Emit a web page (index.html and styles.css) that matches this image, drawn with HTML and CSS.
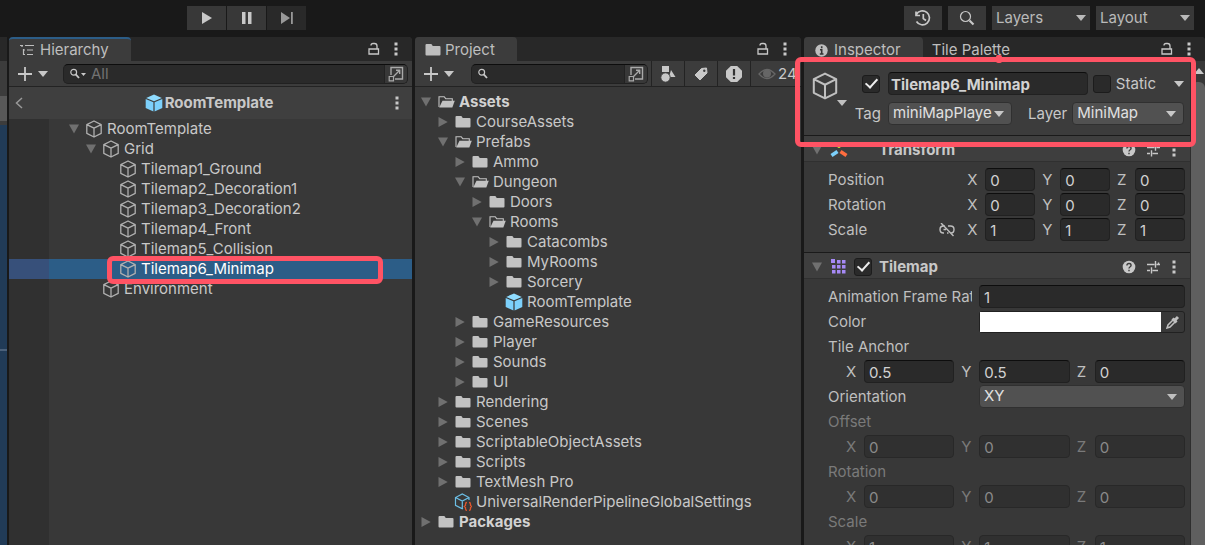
FILE: index.html
```html
<!DOCTYPE html>
<html lang="en">
<head>
<meta charset="utf-8">
<title>RoomTemplate - Editor</title>
<link rel="stylesheet" href="styles.css">
</head>
<body>
<svg class="defs" aria-hidden="true">
  <symbol id="cube" viewBox="0 0 18 18"><path d="M9 1 16.2 4.6V13.4L9 17 1.800 13.400V4.600ZM1.800 4.600 9 8.200 16.200 4.600M9 8.200V17" fill="none" stroke="currentColor" stroke-width="1.300" stroke-linejoin="round"/></symbol>
  <symbol id="prefab" viewBox="0 0 18 18"><path d="M9 .500 16.800 3.900 9 7.300 1.200 3.900Z" fill="#8fdcff"/><path d="M.700 5 8.400 8.300V17.500L.700 14Z" fill="#7cd0fb"/><path d="M17.300 5 9.600 8.300V17.500L17.300 14Z" fill="#7cd0fb"/></symbol>
  <symbol id="folder" viewBox="0 0 18 18"><path d="M1.500 4Q1.500 3 2.500 3H7Q7.700 3 8 3.700L8.700 5H15.500Q16.500 5 16.500 6V13.500Q16.500 14.500 15.500 14.500H2.500Q1.500 14.500 1.500 13.500Z" fill="currentColor"/></symbol>
  <symbol id="folder-open" viewBox="0 0 18 18"><path d="M2 14V3.700H7.200L8.700 5.700H15.300V8" fill="none" stroke="currentColor" stroke-width="1.100"/><path d="M5.500 7.700H17.800L15.300 14.600H2.200Z" fill="currentColor"/></symbol>
  <symbol id="down" viewBox="0 0 10 10"><path d="M0 .500H10L5 9.500Z" fill="currentColor"/></symbol>
  <symbol id="right" viewBox="0 0 10 10"><path d="M.500 0V10L9.700 5Z" fill="currentColor"/></symbol>
  <symbol id="caret" viewBox="0 0 10 6"><path d="M0 0H10L5 6Z" fill="currentColor"/></symbol>
  <symbol id="dots" viewBox="0 0 4 14"><path d="M.500 .500h3v3h-3zM.500 5.500h3v3h-3zM.500 10.500h3v3h-3z" fill="currentColor"/></symbol>
  <symbol id="lock" viewBox="0 0 12 14"><path d="M1 7H10.500V12H1ZM3 3.500Q3 1.500 5 1.500H6.500Q9 1.500 9 4V7" fill="none" stroke="currentColor" stroke-width="1.300"/></symbol>
  <symbol id="plus" viewBox="0 0 16 16"><path d="M8 1V15M1 8H15" stroke="currentColor" stroke-width="1.800"/></symbol>
  <symbol id="expand" viewBox="0 0 16 16"><path d="M3 9V1.500H14.500V13H7M5.500 10.500 11.500 4.500M8 4.300H11.700V8" fill="none" stroke="currentColor" stroke-width="1.400"/><path d="M1.200 10.500H5.500V14.800H1.200Z" fill="none" stroke="currentColor" stroke-width="1.200"/></symbol>
  <symbol id="find" viewBox="0 0 12 12"><circle cx="4.700" cy="4.200" r="2.900" fill="none" stroke="currentColor" stroke-width="1.200"/><path d="M6.500 6.200 10 10" stroke="currentColor" stroke-width="1.800"/></symbol>
  <symbol id="help" viewBox="0 0 14 14"><circle cx="7" cy="7" r="6.300" fill="currentColor"/><path d="M4.900 5.500Q5 3.500 7 3.500T9.100 5.300Q9.100 6.300 7.900 7 7 7.500 7 8.600M7 9.700V11.200" fill="none" stroke="#3c3c3c" stroke-width="1.400"/></symbol>
  <symbol id="preset" viewBox="0 0 14 14"><path d="M0 4.500H7.500M9.500 4.500H13M8.500 1V7.800M0 10.500H3M5.500 10.500H11M4.500 7.200V13.500M11.500 4.500V2.500" stroke="currentColor" stroke-width="1.400"/></symbol>
</svg>

<header class="topbar">
  <div class="playback">
    <button class="tool" aria-label="Play"><svg width="12" height="14" viewBox="0 0 12 14"><path d="M1 1 11 7 1 13Z" fill="currentColor"/></svg></button>
    <button class="tool" aria-label="Pause"><svg width="12" height="14" viewBox="0 0 12 14"><path d="M1 1H4.500V13H1ZM7 1H10.500V13H7Z" fill="currentColor"/></svg></button>
    <button class="tool off" aria-label="Step"><svg width="14" height="14" viewBox="0 0 14 14"><path d="M1 1 10 7 1 13ZM11 1H12.800V13H11Z" fill="currentColor"/></svg></button>
  </div>
  <div class="session">
    <button class="tool" aria-label="History"><svg width="18" height="18" viewBox="0 0 18 18"><path d="M2.300 5.500A7 7 0 1 1 2.500 12.500M2 2.500V6.500H6M9.300 5V9.500L12 11.500" fill="none" stroke="currentColor" stroke-width="1.700"/></svg></button>
    <button class="tool" aria-label="Search"><svg width="16" height="16" viewBox="0 0 16 16"><circle cx="6.500" cy="6.500" r="5" fill="none" stroke="currentColor" stroke-width="1.200"/><path d="M10.500 10.500 14.500 14.500" stroke="currentColor" stroke-width="2.200"/></svg></button>
    <button class="tool menu">Layers<svg class="caret"><use href="#caret"/></svg></button>
    <button class="tool menu">Layout<svg class="caret"><use href="#caret"/></svg></button>
  </div>
</header>

<main class="docks">
  <aside class="scene">
    <div class="scene-tabs"></div><div class="scene-tools"></div><div class="scene-item"></div><div class="scene-view"><hr></div>
  </aside>

  <section class="panel">
    <div class="tabs">
      <button class="tab focused"><svg width="14" height="12" viewBox="0 0 14 12"><path d="M0 1.500H3M5 1.500H14M3 6H5M7 6H13M3 10.500H5M7 10.500H13M2 1.500V3M3.500 5V11" stroke="currentColor" stroke-width="1.200"/></svg>Hierarchy</button>
      <span class="tab-tools"><svg class="lock"><use href="#lock"/></svg><svg class="dots"><use href="#dots"/></svg></span>
    </div>
    <div class="bar">
      <button class="add" aria-label="Create"><svg class="plus"><use href="#plus"/></svg><svg class="caret"><use href="#caret"/></svg></button>
      <label class="search wide"><svg class="find"><use href="#find"/></svg><svg class="tiny"><use href="#caret"/></svg><input type="text" placeholder="All" aria-label="Search hierarchy"><span class="expand"><svg class="i16"><use href="#expand"/></svg></span></label>
    </div>
    <div class="crumb">
      <button class="plain" aria-label="Back"><svg width="8" height="12" viewBox="0 0 8 12"><path d="M7 1 1.500 6 7 11" fill="none" stroke="currentColor" stroke-width="1.500"/></svg></button>
      <strong><svg class="i18"><use href="#prefab"/></svg>RoomTemplate</strong>
      <svg class="dots"><use href="#dots"/></svg>
    </div>
    <ul class="tree scene-tree">
      <li class="d0"><svg class="arrow"><use href="#down"/></svg><svg class="i18"><use href="#cube"/></svg>RoomTemplate</li>
      <li class="d1"><svg class="arrow"><use href="#down"/></svg><svg class="i18"><use href="#cube"/></svg>Grid</li>
      <li class="d2"><i class="arrow"></i><svg class="i18"><use href="#cube"/></svg>Tilemap1_Ground</li>
      <li class="d2"><i class="arrow"></i><svg class="i18"><use href="#cube"/></svg>Tilemap2_Decoration1</li>
      <li class="d2"><i class="arrow"></i><svg class="i18"><use href="#cube"/></svg>Tilemap3_Decoration2</li>
      <li class="d2"><i class="arrow"></i><svg class="i18"><use href="#cube"/></svg>Tilemap4_Front</li>
      <li class="d2"><i class="arrow"></i><svg class="i18"><use href="#cube"/></svg>Tilemap5_Collision</li>
      <li class="d2 selected"><i class="arrow"></i><svg class="i18"><use href="#cube"/></svg>Tilemap6_Minimap<span class="mark row-mark"></span></li>
      <li class="d1"><i class="arrow"></i><svg class="i18"><use href="#cube"/></svg>Environment</li>
    </ul>
  </section>

  <section class="panel">
    <div class="tabs">
      <button class="tab"><svg class="i18"><use href="#folder"/></svg>Project</button>
      <span class="tab-tools"><svg class="lock"><use href="#lock"/></svg><svg class="dots"><use href="#dots"/></svg></span>
    </div>
    <div class="bar">
      <button class="add" aria-label="Create"><svg class="plus"><use href="#plus"/></svg><svg class="caret"><use href="#caret"/></svg></button>
      <label class="search"><svg class="find"><use href="#find"/></svg><input type="text" aria-label="Search project"><span class="expand"><svg class="i16"><use href="#expand"/></svg></span></label>
      <div class="filters">
        <button aria-label="Filter by type"><svg width="16" height="18" viewBox="0 0 16 18"><path d="M2 1H9V7H2ZM11 5 15.500 12H9Z" fill="currentColor"/><circle cx="5.500" cy="12.500" r="4.700" fill="currentColor" stroke="#3c3c3c"/></svg></button>
        <button aria-label="Filter by label"><svg width="14" height="14" viewBox="0 0 14 14"><path d="M7.500 1.500 12.500 1 13 6 6 13 1 8Z" fill="currentColor" stroke="currentColor" stroke-linejoin="round"/><circle cx="10.300" cy="3.700" r="1.200" fill="#3c3c3c"/></svg></button>
        <button aria-label="Problems"><svg width="18" height="18" viewBox="0 0 18 18"><path d="M5.800 1H12.200L17 5.800V12.200L12.200 17H5.800L1 12.200V5.800Z" fill="currentColor"/><path d="M9 4V10.500M9 12V14" stroke="#333" stroke-width="2.200"/></svg></button>
        <button class="hidden-count"><svg width="18" height="12" viewBox="0 0 18 12"><path d="M1 6Q9-3 17 6 9 15 1 6Z" fill="none" stroke="#666" stroke-width="1.300"/><circle cx="9" cy="5.500" r="4" fill="#666"/></svg>24</button>
      </div>
    </div>
    <ul class="tree">
      <li class="d0 root"><svg class="arrow"><use href="#down"/></svg><svg class="i18"><use href="#folder-open"/></svg>Assets</li>
      <li class="d1"><svg class="arrow"><use href="#right"/></svg><svg class="i18"><use href="#folder"/></svg>CourseAssets</li>
      <li class="d1"><svg class="arrow"><use href="#down"/></svg><svg class="i18"><use href="#folder-open"/></svg>Prefabs</li>
      <li class="d2"><svg class="arrow"><use href="#right"/></svg><svg class="i18"><use href="#folder"/></svg>Ammo</li>
      <li class="d2"><svg class="arrow"><use href="#down"/></svg><svg class="i18"><use href="#folder-open"/></svg>Dungeon</li>
      <li class="d3"><svg class="arrow"><use href="#right"/></svg><svg class="i18"><use href="#folder"/></svg>Doors</li>
      <li class="d3"><svg class="arrow"><use href="#down"/></svg><svg class="i18"><use href="#folder-open"/></svg>Rooms</li>
      <li class="d4"><svg class="arrow"><use href="#right"/></svg><svg class="i18"><use href="#folder"/></svg>Catacombs</li>
      <li class="d4"><svg class="arrow"><use href="#right"/></svg><svg class="i18"><use href="#folder"/></svg>MyRooms</li>
      <li class="d4"><svg class="arrow"><use href="#right"/></svg><svg class="i18"><use href="#folder"/></svg>Sorcery</li>
      <li class="d4"><i class="arrow"></i><svg class="i18"><use href="#prefab"/></svg>RoomTemplate</li>
      <li class="d2"><svg class="arrow"><use href="#right"/></svg><svg class="i18"><use href="#folder"/></svg>GameResources</li>
      <li class="d2"><svg class="arrow"><use href="#right"/></svg><svg class="i18"><use href="#folder"/></svg>Player</li>
      <li class="d2"><svg class="arrow"><use href="#right"/></svg><svg class="i18"><use href="#folder"/></svg>Sounds</li>
      <li class="d2"><svg class="arrow"><use href="#right"/></svg><svg class="i18"><use href="#folder"/></svg>UI</li>
      <li class="d1"><svg class="arrow"><use href="#right"/></svg><svg class="i18"><use href="#folder"/></svg>Rendering</li>
      <li class="d1"><svg class="arrow"><use href="#right"/></svg><svg class="i18"><use href="#folder"/></svg>Scenes</li>
      <li class="d1"><svg class="arrow"><use href="#right"/></svg><svg class="i18"><use href="#folder"/></svg>ScriptableObjectAssets</li>
      <li class="d1"><svg class="arrow"><use href="#right"/></svg><svg class="i18"><use href="#folder"/></svg>Scripts</li>
      <li class="d1"><svg class="arrow"><use href="#right"/></svg><svg class="i18"><use href="#folder"/></svg>TextMesh Pro</li>
      <li class="d1"><i class="arrow"></i><svg class="i18" viewBox="0 0 18 18"><path d="M9 15.300 8.300 15.700 1.500 12.300V4.500L8.300 1 15 4.500V7M1.500 4.500 8.300 8 15 4.500M8.300 8V15.700" fill="none" stroke="#6cbfe6" stroke-width="1.200"/><path d="M13 9.500Q11.500 9.500 11.500 11V12.500L10.300 13.500 11.500 14.500V16Q11.500 17.300 13 17.300M15 9.500Q16.500 9.500 16.500 11V12.500L17.600 13.500 16.500 14.500V16Q16.500 17.300 15 17.300" fill="none" stroke="#e0562d" stroke-width="1.300"/></svg>UniversalRenderPipelineGlobalSettings</li>
      <li class="d0 root"><svg class="arrow"><use href="#right"/></svg><svg class="i18"><use href="#folder"/></svg>Packages</li>
    </ul>
  </section>

  <section class="panel inspector">
    <div class="tabs">
      <button class="tab"><svg width="13" height="13" viewBox="0 0 13 13"><circle cx="6.500" cy="6.500" r="6.200" fill="currentColor"/><path d="M6.700 2.300V4.200M5 5.700H6.700V10M4.800 10H8.500" fill="none" stroke="#333" stroke-width="1.600"/></svg>Inspector</button>
      <button class="tab idle">Tile Palette</button>
      <span class="tab-tools"><svg class="lock"><use href="#lock"/></svg><svg class="dots"><use href="#dots"/></svg></span>
    </div>
    <div class="inspect-body">
      <div class="components">
        <div class="object">
          <div class="object-icon"><svg class="i28"><use href="#cube"/></svg><svg class="caret"><use href="#caret"/></svg></div>
          <div class="object-fields">
            <div class="object-row">
              <span class="lead"><input type="checkbox" checked aria-label="Active"></span>
              <input class="field name" type="text" value="Tilemap6_Minimap" aria-label="Name">
              <label class="static"><input type="checkbox">Static</label>
              <svg class="caret"><use href="#caret"/></svg>
            </div>
            <div class="object-row">
              <label class="lead" for="tag">Tag</label>
              <span class="drop tag-drop"><select id="tag"><option>miniMapPlayer</option></select><svg class="caret"><use href="#caret"/></svg></span>
              <label class="layer-label" for="layer">Layer</label>
              <span class="drop"><select id="layer"><option>MiniMap</option></select><svg class="caret"><use href="#caret"/></svg></span>
            </div>
          </div>
          <span class="mark object-mark"></span>
        </div>

        <div class="component-head">
          <svg class="arrow"><use href="#down"/></svg>
          <svg class="i18" viewBox="0 0 18 18"><path d="M9 1V7" stroke="#b6d433" stroke-width="2.600"/><path d="M7.500 10.500 1.500 14.500" stroke="#7cd0fb" stroke-width="3.600"/><path d="M10.500 10.500 16.500 14.500" stroke="#ff6d3f" stroke-width="3.600"/></svg>
          <span class="box-space"></span><h2>Transform</h2>
          <svg class="i14"><use href="#help"/></svg><svg class="i14"><use href="#preset"/></svg><svg class="dots"><use href="#dots"/></svg>
        </div>
        <div class="props transform">
          <div class="prop"><span>Position</span><div class="axes short"><label>X<input class="field" value="0"></label><label>Y<input class="field" value="0"></label><label>Z<input class="field" value="0"></label></div></div>
          <div class="prop"><span>Rotation</span><div class="axes short"><label>X<input class="field" value="0"></label><label>Y<input class="field" value="0"></label><label>Z<input class="field" value="0"></label></div></div>
          <div class="prop"><span>Scale</span><svg class="unlink" width="16" height="14" viewBox="0 0 16 14"><path d="M6 3H4.500Q1 3 1 6.500T4.500 10H5M9 3H11.500Q15 3 15 6.500T12 10M4.500 6.500H7M9.500 10H8M2 0 14.500 13" fill="none" stroke="currentColor" stroke-width="1.400"/></svg><div class="axes short"><label>X<input class="field" value="1"></label><label>Y<input class="field" value="1"></label><label>Z<input class="field" value="1"></label></div></div>
        </div>

        <div class="component-head">
          <svg class="arrow"><use href="#down"/></svg>
          <svg class="i18" viewBox="0 0 18 18"><path d="M1 1h4v4H1zM7 2h3.500v3.500H7zM12 2h3.500v3.500H12zM2 7h3.500v3.500H2zM7 7h3.500v3.500H7zM12 7h3.500v3.500H12zM2 12h3.500v3.500H2zM7 12h3.500v3.500H7zM12 12h3.500v3.500H12z" fill="#a689f5"/></svg>
          <input class="box-space" type="checkbox" checked aria-label="Enable Tilemap"><h2>Tilemap</h2>
          <svg class="i14"><use href="#help"/></svg><svg class="i14"><use href="#preset"/></svg><svg class="dots"><use href="#dots"/></svg>
        </div>
        <div class="props">
          <div class="prop"><label class="key" for="rate">Animation Frame Rate</label><input class="field" id="rate" value="1"></div>
          <div class="prop"><span class="key">Color</span><div class="color"><button class="swatch" aria-label="Color"></button><button class="picker" aria-label="Pick color"><svg width="14" height="14" viewBox="0 0 14 14"><path d="M1 13 2 10 8 4 10 6 4 12Z" fill="none" stroke="currentColor" stroke-width="1.500"/><path d="M6.500 3.500 10.500 7.500M8.500 5.500 12 2" stroke="currentColor" stroke-width="3"/></svg></button></div></div>
          <div class="prop"><span>Tile Anchor</span></div>
          <div class="prop"><div class="axes long"><label>X<input class="field" value="0.5"></label><label>Y<input class="field" value="0.5"></label><label>Z<input class="field" value="0"></label></div></div>
          <div class="prop"><label class="key" for="orient">Orientation</label><span class="drop"><select id="orient"><option>XY</option></select><svg class="caret"><use href="#caret"/></svg></span></div>
          <fieldset disabled>
            <div class="prop"><span>Offset</span></div>
            <div class="prop"><div class="axes long"><label>X<input class="field" value="0"></label><label>Y<input class="field" value="0"></label><label>Z<input class="field" value="0"></label></div></div>
            <div class="prop"><span>Rotation</span></div>
            <div class="prop"><div class="axes long"><label>X<input class="field" value="0"></label><label>Y<input class="field" value="0"></label><label>Z<input class="field" value="0"></label></div></div>
            <div class="prop"><span>Scale</span></div>
            <div class="prop"><div class="axes long"><label>X<input class="field" value="1"></label><label>Y<input class="field" value="1"></label><label>Z<input class="field" value="1"></label></div></div>
          </fieldset>
        </div>
      </div>
      <div class="scrollbar"><svg class="scroll-up" width="10" height="6" viewBox="0 0 10 6"><path d="M0 6H10L5 0Z" fill="currentColor"/></svg><div class="thumb"></div></div>
    </div>
  </section>
</main>
</body>
</html>
```
FILE: styles.css
```css
* { box-sizing: border-box; }
html, body { height: 100%; }
body {
  margin: 0;
  display: flex;
  flex-direction: column;
  overflow: hidden;
  background: #191919;
  color: #c8c8c8;
  font: 15px/20px Inter, "Liberation Sans", sans-serif;
}
button, input, select { font: inherit; color: inherit; margin: 0; }
button { display: flex; align-items: center; border: 0; padding: 0; background: none; }
svg { flex: none; display: block; }
h2 { margin: 0; font-size: 15px; font-weight: 700; }

.defs { position: absolute; width: 0; height: 0; }
.i14 { width: 14px; height: 14px; }
.i16 { width: 16px; height: 16px; }
.i18 { width: 18px; height: 18px; }
.i28 { width: 28px; height: 28px; }
.caret { width: 10px; height: 6px; }
.tiny { width: 5px; height: 3px; }
.plus { width: 16px; height: 16px; }
.find { width: 12px; height: 12px; }
.lock { width: 12px; height: 14px; }
.dots { width: 4px; height: 14px; }
.arrow { width: 10px; height: 10px; flex: none; color: #707070; }

/* Top toolbar */
.topbar {
  flex: none;
  display: flex;
  justify-content: space-between;
  padding: 6px 11px 7px 187px;
}
.playback { display: flex; gap: 1px; }
.session { display: flex; gap: 6px; }
.tool { width: 39px; height: 24px; justify-content: center; background: #383838; }
.tool.off { background: #292929; color: #999; }
.session .tool { width: 38px; }
.session .menu { width: 98px; justify-content: space-between; padding: 0 4px; color: #bababa; }

/* Docked panels */
.docks {
  flex: 1;
  min-height: 0;
  display: grid;
  grid-template-columns: 6px 403fr 386fr 401fr;
  column-gap: 3px;
  overflow: hidden;
}
.docks > * { min-width: 0; min-height: 0; }
.scene { display: flex; flex-direction: column; background: #3c3c3c; margin-right: -1px; }
.scene-tabs { height: 24px; background: #282828; }
.scene-tools { height: 35px; }
.scene-item { height: 25px; background: #585858; margin-bottom: 4px; }
.scene-view { flex: 1; background: #213b57; }
.scene-view hr { margin: 224px 0 0; border: 0; height: 2px; background: #4b617b; }

.panel { display: flex; flex-direction: column; background: #383838; border-radius: 4px 4px 0 0; }
.tabs { height: 24px; flex: none; display: flex; background: #282828; border-radius: 4px 4px 0 0; }
.tab {
  gap: 6px;
  padding: 2px 22px 0 11px;
  border-radius: 4px 4px 0 0;
  background: #3c3c3c;
  color: #bebebe;
}
.tab.focused { border-top: 2px solid #2c5d87; padding-top: 0; }
.tab .i18 { margin: 0 -3px 0 -2px; }
.tab.idle { background: none; padding-left: 9px; }
.tab-tools { display: flex; align-items: center; gap: 14px; margin-left: auto; padding-right: 14px; }

.bar {
  height: 26px;
  flex: none;
  display: flex;
  background: #3c3c3c;
  border-bottom: 1px solid #232323;
}
.add { gap: 5px; padding: 0 0 0 8px; }
.search {
  flex: 1;
  min-width: 0;
  display: flex;
  align-items: center;
  margin: 3px 3px 2px 17px;
  padding-left: 5px;
  background: #2a2a2a;
  border: 1px solid #212121;
  border-top-color: #0d0d0d;
  border-radius: 5px;
}
.search.wide { margin: 3px 4px 2px 15px; }
.search input { flex: 1; min-width: 0; height: 18px; padding: 0 5px; border: 0; background: none; outline: 0; }
.search.wide input { padding-left: 0; }
.search .tiny { margin-right: 5px; }
.search input::placeholder { color: #727272; }
.expand { align-self: stretch; display: flex; align-items: center; padding: 0 3px; background: #383838; border-left: 1px solid #222; border-radius: 0 4px 4px 0; color: #aaa; }
.filters { display: flex; }
.filters button { width: 33px; justify-content: center; border-left: 1px solid #232323; }
.filters .hidden-count { width: 51px; gap: 2px; justify-content: flex-start; padding-left: 7px; }

.crumb {
  height: 32px;
  flex: none;
  display: flex;
  align-items: center;
  justify-content: space-between;
  padding: 0 13px 0 6px;
  background: #3f3f3f;
}
.crumb strong { display: flex; align-items: center; gap: 2px; font-weight: 700; }
.plain { color: #999; }

.tree { flex: 1; margin: 0; padding: 5px 0 0; list-style: none; }
.tree li { height: 20px; display: flex; align-items: center; padding-left: var(--indent); white-space: nowrap; position: relative; }
.tree .arrow { margin-right: 6px; }
.tree .i18 { margin-right: 4px; color: #c2c2c2; }
.tree .root { font-weight: 700; color: #d2d2d2; }
.tree .d0 { --indent: 6px; }
.tree .d1 { --indent: 23px; }
.tree .d2 { --indent: 40px; }
.tree .d3 { --indent: 57px; }
.tree .d4 { --indent: 74px; }
.scene-tree { padding: 0; background: linear-gradient(90deg, #303030 40px, #383838 40px); }
.scene-tree .i18 { color: #b0b0b0; margin-right: 4px; }
.scene-tree .d0 { --indent: 60px; }
.scene-tree .d1 { --indent: 77px; }
.scene-tree .d2 { --indent: 94px; }
.tree .selected { background: linear-gradient(90deg, #37507a 40px, #2c5d87 40px); color: #fff; }

/* Red highlight frames */
.mark { position: absolute; z-index: 2; border: 5px solid #ff5364; border-radius: 6px; pointer-events: none; }
.row-mark { left: 98px; right: 29px; top: -3px; bottom: -5px; }
.object-mark { left: -9px; right: -6px; top: -4px; bottom: -12px; }
.object-mark::before { content: ""; position: absolute; left: 50%; top: -7px; width: 6px; height: 8px; background: #ff5364; border-radius: 2px; }

/* Inspector */
.inspect-body { flex: 1; min-height: 0; display: flex; }
.components { flex: 1; min-width: 0; }
.scrollbar { width: 15px; display: flex; flex-direction: column; border-left: 1px solid #2e2e2e; }
.scroll-up { margin: 7px 0 8px 3px; }
.thumb { flex: 1; background: #5f5f5f; border-radius: 6px 6px 0 0; }

.object { position: relative; display: flex; padding: 11px 6px 10px 7px; background: #3c3c3c; }
.object-icon { display: flex; flex-direction: column; width: 36px; color: #c0c0c0; }
.object-icon .caret { margin-left: 26px; }
.object-fields { flex: 1; min-width: 0; display: flex; flex-direction: column; gap: 7px; }
.object-row { display: flex; align-items: center; height: 23px; }
.lead { width: 41px; flex: none; display: flex; justify-content: flex-end; padding-right: 7px; }
.lead input { margin-right: 1px; }
.static { display: flex; align-items: center; gap: 5px; margin: 0 18px 0 5px; }
.layer-label { margin: 0 5px 0 16px; }

input[type="checkbox"] {
  appearance: none;
  flex: none;
  width: 18px;
  height: 18px;
  background: #2a2a2a;
  border: 1px solid #1c1c1c;
  border-radius: 3px;
  display: grid;
  place-items: center;
}
input[type="checkbox"]:checked::before {
  content: "";
  width: 5px;
  height: 10px;
  margin-bottom: 3px;
  border: solid #eee;
  border-width: 0 2px 2px 0;
  transform: rotate(42deg);
}
.field {
  flex: 1;
  min-width: 0;
  width: 0;
  height: 23px;
  padding: 2px 4px 0;
  background: #2a2a2a;
  border: 1px solid #212121;
  border-top-color: #0d0d0d;
  border-radius: 4px;
  color: #d2d2d2;
  outline: 0;
}
.name { padding: 2px 2px 0; font-weight: 700; }
.drop { flex: 1; min-width: 0; display: grid; grid-template-columns: 1fr 18px; align-items: center; }
.drop select {
  grid-area: 1 / 1 / 2 / 3;
  appearance: none;
  width: 100%;
  height: 23px;
  padding: 0 19px 2px 4px;
  background: #515151;
  border: 1px solid #303030;
  border-radius: 4px;
  color: #e0e0e0;
}
.drop .caret { grid-area: 1 / 2; pointer-events: none; }
.tag-drop { flex: 0 0 124px; }

.component-head {
  height: 27px;
  display: flex;
  align-items: center;
  padding: 2px 14px 0 8px;
  background: #3e3e3e;
  border-top: 1px solid #1a1a1a;
  border-bottom: 1px solid #303030;
}
.component-head .i18 { margin: 0 6px 0 8px; }
.component-head h2 { flex: 1; margin-left: 7px; }
.component-head .i14 { margin-right: 11px; }
.box-space { width: 18px; flex: none; }

.props { display: flex; flex-direction: column; gap: 2px; padding: 6px 5px 0 24px; }
.transform { padding-bottom: 11px; }
.prop { display: flex; align-items: center; height: 23px; color: #bfbfbf; white-space: nowrap; }
.key { width: 144px; margin-right: 7px; flex: none; overflow: hidden; }
.axes { display: flex; flex: 1; gap: 7px; margin-left: 18px; }
.axes label { flex: 1; min-width: 0; display: grid; grid-template-columns: 18px 1fr; align-items: center; }
.axes .field { width: 100%; }
.short { flex: none; width: 61%; margin-left: auto; }
.unlink { margin-left: auto; }
.unlink + .short { margin-left: 12px; }
.color { flex: 1; display: flex; height: 22px; border: 1px solid #212121; border-radius: 3px; }
.swatch { flex: 1; background: #fff; }
.picker { width: 23px; justify-content: center; }
fieldset { display: flex; flex-direction: column; gap: 2px; margin: 0; padding: 0; border: 0; min-width: 0; }
fieldset .prop { color: #7a7a7a; }
fieldset .field { background: #303030; border-color: #282828; color: #8a8a8a; }
```
